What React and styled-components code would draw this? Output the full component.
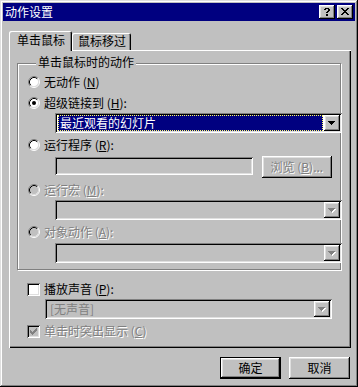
import React from 'react';
import styled, { createGlobalStyle, css } from 'styled-components';

const Global = createGlobalStyle`
  html, body { margin: 0; padding: 0; background: #c0c0c0; }
  body { font-family: "Noto Sans CJK SC", "Noto Sans", sans-serif; font-size: 12px; color: #000; }
  * { box-sizing: border-box; }
`;

const raised = css`
  box-shadow: inset -1px -1px #000, inset 1px 1px #fff, inset -2px -2px #808080, inset 2px 2px #dfdfdf;
`;
const sunken = css`
  box-shadow: inset 1px 1px #808080, inset -1px -1px #fff, inset 2px 2px #000, inset -2px -2px #dfdfdf;
`;
const disabledText = css`
  color: #808080;
  text-shadow: 1px 1px 0 #fff;
`;

const Window = styled.div`
  width: 358px;
  height: 387px;
  background: #c0c0c0;
  padding: 3px;
  display: flex;
  flex-direction: column;
  box-shadow: inset -1px -1px #000, inset 1px 1px #dfdfdf, inset -2px -2px #808080, inset 2px 2px #fff;
`;

const TitleBar = styled.div`
  height: 18px;
  background: #000080;
  display: flex;
  align-items: center;
  padding: 0 2px 0 2px;
`;

const TitleText = styled.span`
  color: #fff;
  font-size: 12px;
  line-height: 18px;
  padding-left: 0;
`;

const TitleButtons = styled.div`
  margin-left: auto;
  display: flex;
  gap: 2px;
`;

const TitleButton = styled.div`
  width: 16px;
  height: 14px;
  background: #c0c0c0;
  ${raised};
  display: flex;
  align-items: flex-start;
  justify-content: flex-start;
  svg { display: block; margin: 3px 0 0 ${(p) => p.$ox}px; }
`;

const Content = styled.div`
  padding: 10px 4px 0 6px;
  display: flex;
  flex-direction: column;
`;

const TabStrip = styled.div`
  display: flex;
  align-items: flex-end;
  height: 19px;
`;

const Tab = styled.div`
  position: relative;
  z-index: ${(p) => (p.$active ? 1 : 0)};
  width: ${(p) => p.$w}px;
  height: ${(p) => (p.$active ? 20 : 17)}px;
  margin-bottom: ${(p) => (p.$active ? -1 : 0)}px;
  padding-left: ${(p) => p.$pl}px;
  background: #c0c0c0;
  line-height: ${(p) => (p.$active ? 18 : 16)}px;
  font-size: 12px;
  border-top-left-radius: 2px;
  border-top-right-radius: 2px;
  box-shadow: inset 1px 1px #fff, inset -1px 0 #000, inset -2px 0 #808080;
`;

const Panel = styled.div`
  width: 342px;
  height: 298px;
  padding: 13px 10px 0 8px;
  display: flex;
  flex-direction: column;
  box-shadow: inset 1px 1px #fff, inset -1px -1px #000, inset -2px -2px #808080;
`;

const GroupBox = styled.div`
  width: 324px;
  height: 207px;
  border: 1px solid #808080;
  box-shadow: inset 1px 1px #fff, 1px 1px #fff;
  padding: 0 8px 0 10px;
  display: flex;
  flex-direction: column;
`;

const Legend = styled.span`
  align-self: flex-start;
  height: 12px;
  line-height: 12px;
  margin: -8px 0 -4px 8px;
  padding: 0 2px;
  background: #c0c0c0;
  font-size: 12px;
`;

const OptionRow = styled.div`
  display: flex;
  align-items: center;
  gap: 4px;
  height: 16px;
  margin-top: ${(p) => p.$mt || 0}px;
  margin-left: ${(p) => p.$ml || 0}px;
`;

const Label = styled.span`
  font-size: 12px;
  line-height: 16px;
  white-space: nowrap;
  ${(p) => p.$disabled && disabledText};
`;

const Acc = styled.span`
  text-decoration: underline;
`;

const RadioSvg = styled.svg`
  display: block;
  flex: none;
`;

const CheckBox = styled.span`
  width: 13px;
  height: 13px;
  flex: none;
  background: ${(p) => (p.$disabled ? '#c0c0c0' : '#fff')};
  ${sunken};
  display: block;
  svg { display: block; margin: 3px 0 0 3px; }
`;

const Combo = styled.div`
  display: flex;
  align-items: stretch;
  height: 20px;
  width: 287px;
  margin-top: ${(p) => p.$mt || 0}px;
  margin-left: ${(p) => p.$ml || 27}px;
  padding: 2px;
  background: ${(p) => (p.$disabled ? '#c0c0c0' : '#fff')};
  ${sunken};
`;

const ComboValue = styled.div`
  flex: 1;
  display: flex;
  align-items: stretch;
  padding: 0 1px;
  color: ${(p) => (p.$disabled ? '#808080' : '#000')};
  font-size: 12px;
  line-height: 16px;
  padding-left: 3px;
`;

const Highlight = styled.div`
  flex: 1;
  margin-left: -2px;
  background: #000080;
  color: #fff;
  border: 1px dotted #ffff66;
  padding-left: 1px;
  line-height: 14px;
  font-size: 12px;
`;

const DropButton = styled.div`
  width: 16px;
  height: 16px;
  flex: none;
  background: #c0c0c0;
  ${raised};
  display: flex;
  align-items: center;
  justify-content: center;
  svg { display: block; margin-top: 1px; }
`;

const FieldRow = styled.div`
  display: flex;
  align-items: flex-start;
  gap: 9px;
  height: 22px;
  margin-top: ${(p) => p.$mt || 0}px;
  margin-left: 27px;
`;

const TextField = styled.div`
  width: 205px;
  height: 18px;
  margin-top: 1px;
  background: #c0c0c0;
  ${sunken};
`;

const PushButton = styled.div`
  width: ${(p) => p.$w || 61}px;
  height: 22px;
  background: #c0c0c0;
  display: flex;
  align-items: center;
  justify-content: center;
  font-size: 12px;
  line-height: 16px;
  ${(p) =>
    p.$default
      ? css`
          box-shadow: inset 0 0 0 1px #000, inset -2px -2px #000, inset 2px 2px #fff, inset -3px -3px #808080, inset 3px 3px #dfdfdf;
        `
      : raised};
  ${(p) => p.$disabled && disabledText};
`;

const ButtonRow = styled.div`
  display: flex;
  justify-content: flex-end;
  gap: 8px;
  margin-top: 9px;
  padding-right: 1px;
`;

const Radio = ({ checked, disabled }) => (
  <RadioSvg width="12" height="12" viewBox="0 0 12 12">
    <circle cx="6" cy="6" r="4.5" fill={disabled ? '#c0c0c0' : '#fff'} />
    <path d="M2.11 9.89 A5.5 5.5 0 0 1 9.89 2.11" fill="none" stroke="#808080" />
    <path d="M9.89 2.11 A5.5 5.5 0 0 1 2.11 9.89" fill="none" stroke="#fff" />
    <path d="M2.82 9.18 A4.5 4.5 0 0 1 9.18 2.82" fill="none" stroke="#000" />
    <path d="M9.18 2.82 A4.5 4.5 0 0 1 2.82 9.18" fill="none" stroke="#dfdfdf" />
    {checked && <circle cx="6" cy="6" r="2" fill="#000" />}
  </RadioSvg>
);

const CheckMark = ({ color }) => (
  <svg width="7" height="7" viewBox="0 0 7 7">
    <path
      fill={color}
      d="M6 0h1v1H6z M5 1h2v1H5z M0 2h1v1H0z M4 2h3v1H4z M0 3h2v1H0z M3 3h3v1H3z M0 4h5v1H0z M1 5h3v1H1z M2 6h1v1H2z"
    />
  </svg>
);

const Arrow = ({ disabled }) => (
  <svg width="8" height="5" viewBox="0 0 8 5">
    {disabled && <path fill="#fff" d="M1 1h7v1H1z M2 2h5v1H2z M3 3h3v1H3z M4 4h1v1H4z" />}
    <path fill={disabled ? '#808080' : '#000'} d="M0 0h7v1H0z M1 1h5v1H1z M2 2h3v1H2z M3 3h1v1H3z" />
  </svg>
);

const HelpGlyph = () => (
  <svg width="7" height="8" viewBox="0 0 7 8">
    <path fill="#000" d="M1 0h4v1H1z M0 1h2v1H0z M4 1h2v1H4z M4 2h2v1H4z M3 3h2v1H3z M2 4h2v1H2z M2 6h2v2H2z" />
  </svg>
);

const CloseGlyph = () => (
  <svg width="8" height="7" viewBox="0 0 8 7">
    <path
      fill="#000"
      d="M0 0h2v1H0z M6 0h2v1H6z M1 1h2v1H1z M5 1h2v1H5z M2 2h4v1H2z M3 3h2v1H3z M2 4h4v1H2z M1 5h2v1H1z M5 5h2v1H5z M0 6h2v1H0z M6 6h2v1H6z"
    />
  </svg>
);

export default function App() {
  return (
    <>
      <Global />
      <Window>
        <TitleBar>
          <TitleText>动作设置</TitleText>
          <TitleButtons>
            <TitleButton $ox={5}>
              <HelpGlyph />
            </TitleButton>
            <TitleButton $ox={4}>
              <CloseGlyph />
            </TitleButton>
          </TitleButtons>
        </TitleBar>
        <Content>
          <TabStrip>
            <Tab $active $w={63} $pl={8}>单击鼠标</Tab>
            <Tab $w={59} $pl={6}>鼠标移过</Tab>
          </TabStrip>
          <Panel>
            <GroupBox>
              <Legend>单击鼠标时的动作</Legend>
              <OptionRow $mt={10}>
                <Radio />
                <Label>无动作 (<Acc>N</Acc>)</Label>
              </OptionRow>
              <OptionRow $mt={5}>
                <Radio checked />
                <Label>超级链接到 (<Acc>H</Acc>):</Label>
              </OptionRow>
              <Combo $mt={2}>
                <ComboValue>
                  <Highlight>最近观看的幻灯片</Highlight>
                </ComboValue>
                <DropButton>
                  <Arrow />
                </DropButton>
              </Combo>
              <OptionRow $mt={4}>
                <Radio />
                <Label>运行程序 (<Acc>R</Acc>):</Label>
              </OptionRow>
              <FieldRow $mt={3}>
                <TextField />
                <PushButton $w={73} $disabled>浏览 (<Acc>B</Acc>)...</PushButton>
              </FieldRow>
              <OptionRow $mt={4}>
                <Radio disabled />
                <Label $disabled>运行宏 (<Acc>M</Acc>):</Label>
              </OptionRow>
              <Combo $mt={2} $disabled>
                <ComboValue $disabled />
                <DropButton>
                  <Arrow disabled />
                </DropButton>
              </Combo>
              <OptionRow $mt={4}>
                <Radio disabled />
                <Label $disabled>对象动作 (<Acc>A</Acc>):</Label>
              </OptionRow>
              <Combo $mt={3} $disabled>
                <ComboValue $disabled />
                <DropButton>
                  <Arrow disabled />
                </DropButton>
              </Combo>
            </GroupBox>
            <OptionRow $mt={11} $ml={10}>
              <CheckBox />
              <Label>播放声音 (<Acc>P</Acc>):</Label>
            </OptionRow>
            <Combo $mt={2} $ml={28} $disabled>
              <ComboValue $disabled>[无声音]</ComboValue>
              <DropButton>
                <Arrow disabled />
              </DropButton>
            </Combo>
            <OptionRow $mt={4} $ml={10}>
              <CheckBox $disabled>
                <CheckMark color="#808080" />
              </CheckBox>
              <Label $disabled>单击时突出显示 (<Acc>C</Acc>)</Label>
            </OptionRow>
          </Panel>
          <ButtonRow>
            <PushButton $default>确定</PushButton>
            <PushButton>取消</PushButton>
          </ButtonRow>
        </Content>
      </Window>
    </>
  );
}
